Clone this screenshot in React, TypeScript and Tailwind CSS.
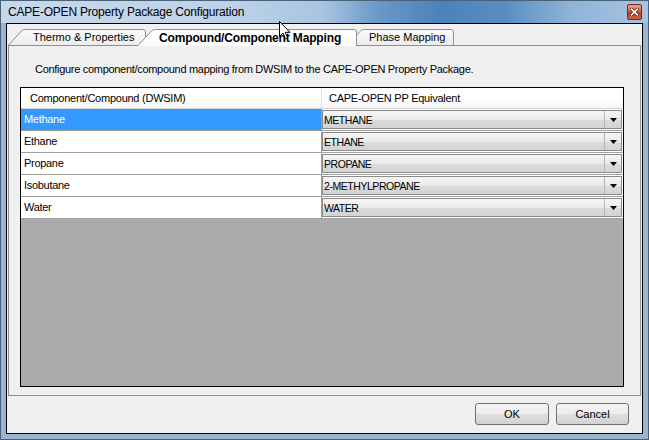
import React from 'react'

const rows = [
  { name: 'Methane', pp: 'METHANE' },
  { name: 'Ethane', pp: 'ETHANE' },
  { name: 'Propane', pp: 'PROPANE' },
  { name: 'Isobutane', pp: '2-METHYLPROPANE' },
  { name: 'Water', pp: 'WATER' },
]

function TabShape({ w, h, selected }: { w: number; h: number; selected?: boolean }) {
  const d = `M0.5,${h} L${h - 2},1.5 Q${h - 0.5},0.5 ${h + 1.5},0.5 L${w - 3},0.5 Q${w - 0.5},0.5 ${w - 0.5},3 L${w - 0.5},${h}`
  const id = selected ? 'tabSel' : 'tabNorm'
  return (
    <svg className="absolute left-0 top-0" width={w} height={h} viewBox={`0 0 ${w} ${h}`}>
      <defs>
        <linearGradient id={id} x1="0" y1="0" x2="0" y2="1">
          <stop offset="0" stopColor={selected ? '#ffffff' : '#fbfbfb'} />
          <stop offset="1" stopColor={selected ? '#fcfcfc' : '#ececec'} />
        </linearGradient>
      </defs>
      <path d={d + ' Z'} fill={`url(#${id})`} stroke="none" />
      <path d={d} fill="none" stroke="#8e8f8f" strokeWidth="1" />
    </svg>
  )
}

function Tab({
  label,
  w,
  h,
  selected,
  className,
  textClass,
}: {
  label: string
  w: number
  h: number
  selected?: boolean
  className: string
  textClass: string
}) {
  return (
    <div className={`relative shrink-0 ${className}`} style={{ width: w, height: h }}>
      <TabShape w={w} h={h} selected={selected} />
      <span className={`absolute top-[1px] whitespace-nowrap leading-[15px] text-black ${textClass}`}>{label}</span>
    </div>
  )
}

function ComboCell({ value }: { value: string }) {
  return (
    <div className="flex h-full flex-1 p-[1px] pl-0">
      <div className="flex flex-1 border border-[#8a8a8a] bg-[linear-gradient(#f6f6f6,#e9e9e9_50%,#dcdcdc_51%,#d3d3d3)]">
        <span className="flex-1 pl-[1px] text-[10.5px] leading-[18px] tracking-[-0.45px] text-black">{value}</span>
        <div className="flex w-[17px] items-center justify-center border-l border-[#b5b5b5]">
          <svg width="7" height="4" viewBox="0 0 7 4">
            <path d="M0,0 L7,0 L3.5,4 Z" fill="#000" />
          </svg>
        </div>
      </div>
    </div>
  )
}

export default function App() {
  return (
    <div className="relative flex h-[440px] w-[649px] flex-col overflow-hidden border border-[#4a6178] bg-[#98b6d1] font-['Liberation_Sans',Arial,sans-serif]">
      {/* title bar */}
      <div className="flex h-[22px] shrink-0 items-center justify-between bg-[linear-gradient(90deg,#c6d8eb_0%,#bdd3e9_35%,#a8c4e0_50%,#6b99c8_58%,#4b82bb_68%,#5a8ec3_78%,#8fb3d7_88%,#a7c5e3_100%)] pl-[7px] pr-[6px]">
        <span className="text-[12px] leading-[14px] tracking-[-0.2px] text-black">CAPE-OPEN Property Package Configuration</span>
        <div className="flex h-[16px] w-[15px] items-center justify-center rounded-[2px] border border-[#6e2a1c] bg-[linear-gradient(#e8a28f,#d3654a_45%,#c2401f_55%,#d0664a)]">
          <svg width="9" height="8" viewBox="0 0 9 8">
            <path d="M1.5,1.2 L7.5,6.8 M7.5,1.2 L1.5,6.8" stroke="#5a1a10" strokeWidth="3.2" strokeLinecap="square" />
            <path d="M1.5,1.2 L7.5,6.8 M7.5,1.2 L1.5,6.8" stroke="#ffffff" strokeWidth="1.6" strokeLinecap="square" />
          </svg>
        </div>
      </div>

      {/* client area */}
      <div className="mx-[5px] mb-[5px] flex flex-1 flex-col border border-black bg-[#f0f0f0]">
        {/* tab strip */}
        <div className="relative z-10 flex h-[21px] shrink-0 items-end pl-[1px]">
          <Tab label="Thermo & Properties" w={138} h={16} className="z-[2]" textClass="left-[25px] text-[11px]" />
          <Tab
            label="Compound/Component Mapping"
            w={220}
            h={17}
            selected
            className="z-[3] -mb-[1px] ml-[-9px]"
            textClass="left-[22px] top-[2px] text-[12px] font-bold tracking-[-0.15px]"
          />
          <Tab label="Phase Mapping" w={107} h={16} className="z-[1] ml-[-10px]" textClass="left-[22px] text-[11px]" />
        </div>

        {/* tab page */}
        <div className="mx-[1px] flex h-[351px] shrink-0 flex-col border border-[#8e8f8f] bg-[#f0f0f0] pl-[11px]">
          <p className="ml-[15px] mt-[17px] text-[11px] leading-[13px] tracking-[-0.3px] text-black">
            Configure component/compound mapping from DWSIM to the CAPE-OPEN Property Package.
          </p>
          <div className="mt-[11px] flex h-[300px] w-[604px] flex-col border border-black bg-[#ababab]">
            <div className="flex h-[21px] shrink-0 border-b border-[#d5d5d5] bg-[linear-gradient(#ffffff,#ffffff_60%,#f4f5f7)] text-[11px] tracking-[-0.25px] text-black">
              <div className="flex w-[301px] items-center border-r border-[#e3e3e3] pl-[9px]">Component/Compound (DWSIM)</div>
              <div className="flex flex-1 items-center pl-[7px]">CAPE-OPEN PP Equivalent</div>
            </div>
            {rows.map((r, i) => (
              <div key={r.name} className="flex h-[22px] shrink-0 border-b border-[#a0a0a0] bg-white">
                <div
                  className={`flex w-[301px] items-center border-r border-[#a0a0a0] pl-[3px] text-[11px] tracking-[-0.3px] ${
                    i === 0 ? 'bg-[#3399ff] text-white' : 'text-black'
                  }`}
                >
                  {r.name}
                </div>
                <ComboCell value={r.pp} />
              </div>
            ))}
          </div>
        </div>

        {/* buttons */}
        <div className="mt-[7px] flex justify-end gap-[7px] pr-[13px]">
          <button className="h-[22px] w-[74px] rounded-[3px] border border-[#707070] bg-[linear-gradient(#f3f3f3,#ececec_50%,#dfdfdf_51%,#d2d2d2)] text-[11px] text-black">
            OK
          </button>
          <button className="h-[22px] w-[73px] rounded-[3px] border border-[#707070] bg-[linear-gradient(#f3f3f3,#ececec_50%,#dfdfdf_51%,#d2d2d2)] text-[11px] text-black">
            Cancel
          </button>
        </div>
      </div>

      {/* mouse pointer */}
      <svg className="absolute left-[278px] top-[20px] z-20" width="12" height="19" viewBox="0 0 12 19">
        <path
          d="M0.5,0.5 L0.5,15.5 L4,12 L6.5,17.8 L8.6,16.9 L6.2,11.3 L11,11.3 Z"
          fill="#ffffff"
          stroke="#000000"
          strokeWidth="1"
          strokeLinejoin="miter"
        />
      </svg>
    </div>
  )
}
